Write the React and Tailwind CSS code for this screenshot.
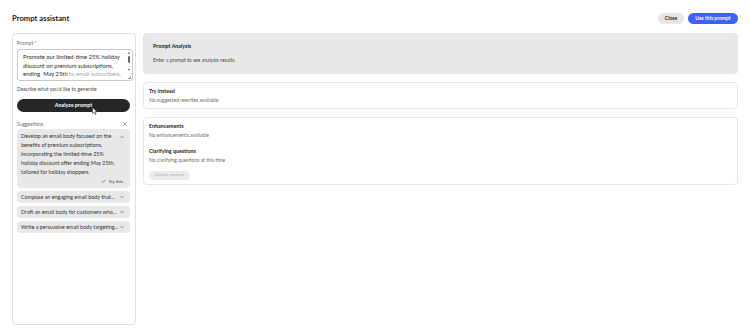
import { Check, ChevronDown, ChevronUp, X } from 'lucide-react';

const suggestions = [
  'Compose an engaging email body that...',
  'Draft an email body for customers who...',
  'Write a persuasive email body targeting...',
];

const App = () => {
  return (
    <div className="w-[750px] h-[336px] bg-white px-[12px] pt-[13px] font-['Lato',sans-serif] text-[#222] flex flex-col">
      {/* Header */}
      <div className="flex items-center justify-between h-[11px]">
        <h1 className="text-[7.7px] font-bold leading-none">Prompt assistant</h1>
        <div className="flex items-center gap-[4px]">
          <button className="h-[11px] w-[26px] rounded-full bg-[#e6e6e6] text-[5px] font-bold text-[#222]">
            Close
          </button>
          <button className="h-[11px] w-[50px] rounded-full bg-[#3b63fb] text-[5px] font-bold text-white">
            Use this prompt
          </button>
        </div>
      </div>

      <div className="mt-[9px] flex gap-[7px] items-start">
        {/* Left panel */}
        <div className="w-[124px] h-[292px] border border-[#e1e1e1] rounded-[4px] px-[4px] pt-[6px] flex flex-col">
          <p className="text-[5px] leading-[6px] text-[#6e6e6e]">Prompt *</p>
          <div className="relative mt-[3px] h-[32px] w-[116px] border border-[#c9c9c9] rounded-[3px] flex overflow-hidden">
            <div className="flex-1 pl-[5px] pr-[2px] pt-[3px] text-[5.8px] leading-[8.5px] text-[#2c2c2c]">
              <p>Promote our limited-time 25% holiday</p>
              <p>discount on premium subscriptions,</p>
              <p>
                ending&nbsp; May 25th <span className="text-[#a8a8a8]">to email subscribers,</span>
              </p>
              <p className="text-[#a8a8a8] h-[3px] overflow-hidden leading-[6px]">highlight urgency and benefits, include a</p>
            </div>
            <div className="w-[6px] flex flex-col items-center pt-[2px]">
              <div className="w-0 h-0 border-l-[1.5px] border-r-[1.5px] border-b-[2px] border-l-transparent border-r-transparent border-b-[#555]" />
              <div className="mt-[2px] w-[2.5px] h-[7px] rounded-full bg-[#666]" />
              <div className="mt-[6px] w-0 h-0 border-l-[1.5px] border-r-[1.5px] border-t-[2px] border-l-transparent border-r-transparent border-t-[#555]" />
            </div>
            <div className="absolute right-[1px] bottom-[1px] w-[3px] h-[3px] border-r border-b border-[#999]" />
          </div>
          <p className="mt-[5px] text-[5px] leading-[6px] text-[#4b4b4b]">Describe what you'd like to generate</p>

          <div className="relative mt-[7px]">
            <button className="block w-[113px] h-[13px] rounded-full bg-[#262626] text-white text-[5.3px] font-bold">
              Analyze prompt
            </button>
            <svg className="absolute left-[75px] top-[8px]" width="6" height="8" viewBox="0 0 6 8">
              <path d="M0.5 0.5 L0.5 6.5 L2 5.2 L3 7.5 L4 7 L3 4.8 L5 4.8 Z" fill="#fff" stroke="#333" strokeWidth="0.6" />
            </svg>
          </div>

          <div className="mt-[9px] flex items-center justify-between pr-[3px]">
            <p className="text-[5px] leading-[6px] text-[#6e6e6e]">Suggestions</p>
            <X size={6} strokeWidth={2} className="text-[#444]" />
          </div>

          <div className="mt-[2px] w-[113px] flex flex-col gap-[3px]">
            <div className="rounded-[4px] bg-[#e8e8e8] pl-[4px] pr-[5px] pt-[3px] pb-[2px]">
              <div className="flex justify-between">
                <div className="text-[5.4px] leading-[9px] text-[#333]">
                  <p>Develop an email body focused on the</p>
                  <p>benefits of premium subscriptions,</p>
                  <p>incorporating the limited-time 25%</p>
                  <p>holiday discount offer ending May 25th,</p>
                  <p>tailored for holiday shoppers.</p>
                </div>
                <ChevronUp size={6} strokeWidth={2} className="mt-[2px] text-[#444]" />
              </div>
              <div className="flex justify-end items-center gap-[2px] h-[9px] pr-[2px]">
                <Check size={5} strokeWidth={2.5} className="text-[#333]" />
                <span className="text-[4.6px] text-[#333]">Try this</span>
              </div>
            </div>
            {suggestions.map((s) => (
              <div key={s} className="h-[12px] rounded-[4px] bg-[#e8e8e8] pl-[4px] pr-[5px] flex items-center justify-between">
                <span className="text-[5.4px] text-[#333]">{s}</span>
                <ChevronDown size={6} strokeWidth={2} className="text-[#444]" />
              </div>
            ))}
          </div>
        </div>

        {/* Right column */}
        <div className="flex-1 flex flex-col gap-[8px]">
          <div className="h-[41px] rounded-[4px] bg-[#e8e8e8] pl-[10px] pt-[10px]">
            <p className="text-[5.3px] leading-[6px] font-bold text-[#222]">Prompt Analysis</p>
            <p className="mt-[8px] text-[5px] leading-[6px] text-[#4b4b4b]">Enter a prompt to see analysis results.</p>
          </div>
          <div className="h-[27px] rounded-[4px] border border-[#e6e6e6] pl-[5px] pt-[5px]">
            <p className="text-[5.3px] leading-[6px] font-bold text-[#222]">Try instead</p>
            <p className="mt-[3px] text-[5px] leading-[6px] text-[#6e6e6e]">No suggested rewrites available</p>
          </div>
          <div className="h-[68px] rounded-[4px] border border-[#e6e6e6] pl-[5px] pt-[5px]">
            <p className="text-[5.3px] leading-[6px] font-bold text-[#222]">Enhancements</p>
            <p className="mt-[3px] text-[5px] leading-[6px] text-[#6e6e6e]">No enhancements available</p>
            <p className="mt-[10px] text-[5.3px] leading-[6px] font-bold text-[#222]">Clarifying questions</p>
            <p className="mt-[3px] text-[5px] leading-[6px] text-[#6e6e6e]">No clarifying questions at this time</p>
            <button className="block mt-[8px] h-[9px] w-[41px] rounded-full bg-[#ececec] text-[4.3px] text-[#bdbdbd] font-bold">
              Update content
            </button>
          </div>
        </div>
      </div>
    </div>
  );
};

export default App;
